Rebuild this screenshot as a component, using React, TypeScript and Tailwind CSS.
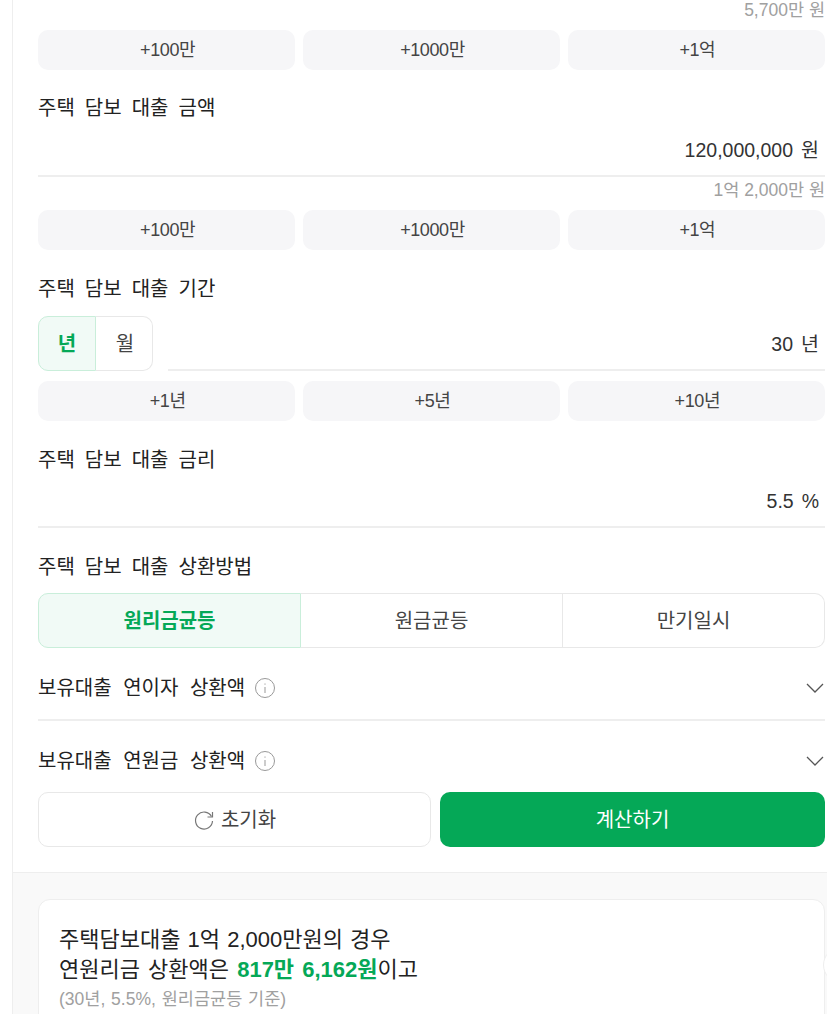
const FONT = "font-['Liberation_Sans','Noto_Sans_CJK_KR',sans-serif]";

function QuickButtons({ items }: { items: string[] }) {
  return (
    <div className="grid grid-cols-3 gap-[7.5px]">
      {items.map((item) => (
        <button
          key={item}
          className="h-10 rounded-[10px] bg-[#f6f6f8] pl-[2px] text-[18px] tracking-[-0.4px] text-[#444]"
        >
          {item}
        </button>
      ))}
    </div>
  );
}

function Label({ children }: { children: React.ReactNode }) {
  return <div className="text-[20px] leading-[26px] text-[#222] [word-spacing:4.5px]">{children}</div>;
}

function AmountInput({ value, unit }: { value: string; unit: string }) {
  return (
    <div className="flex h-[53px] items-center justify-end gap-[8px] border-b-2 border-[#eeeeee] pt-[3px] pr-[6px] text-[19.5px] text-[#333]">
      <span>{value}</span>
      <span>{unit}</span>
    </div>
  );
}

function Hint({ children }: { children: React.ReactNode }) {
  return <div className="text-right text-[17.5px] leading-5 text-[#a0a0a0]">{children}</div>;
}

function InfoIcon() {
  return (
    <svg width="22" height="22" viewBox="0 0 22 22" fill="none" stroke="#999" strokeWidth="1">
      <circle cx="11" cy="11" r="9.5" />
      <path d="M11 10v6M11 6.5v1.2" />
    </svg>
  );
}

function Chevron() {
  return (
    <svg width="20" height="12" viewBox="0 0 20 12" fill="none" stroke="#555" strokeWidth="1.3">
      <path d="M2 2l8 8 8-8" />
    </svg>
  );
}

function AccordionRow({ title, className }: { title: string; className: string }) {
  return (
    <div className={`flex items-center justify-between ${className}`}>
      <div className="flex items-center gap-[9px] text-[20px] text-[#222] [word-spacing:6px]">
        {title}
        <InfoIcon />
      </div>
      <Chevron />
    </div>
  );
}

export default function App() {
  return (
    <div className={`relative h-[1014px] overflow-hidden bg-white pl-3 ${FONT}`}>
      <div className="h-full border-l border-[#eeeeee]">
        <div className="pr-[2px] pl-[25px]">
          <div className="flex h-[30px] items-start justify-end">
            <Hint>5,700만 원</Hint>
          </div>
          <QuickButtons items={["+100만", "+1000만", "+1억"]} />

          <div className="mt-[25px]">
            <Label>주택 담보 대출 금액</Label>
          </div>
          <div className="mt-[3px]">
            <AmountInput value="120,000,000" unit="원" />
          </div>
          <div className="mt-[3px]">
            <Hint>1억 2,000만 원</Hint>
          </div>
          <div className="mt-[10px]">
            <QuickButtons items={["+100만", "+1000만", "+1억"]} />
          </div>

          <div className="mt-[26px]">
            <Label>주택 담보 대출 기간</Label>
          </div>
          <div className="mt-[14px] flex items-end gap-[15px]">
            <div className="flex h-[55px] w-[115px] rounded-[10px] text-[20px]">
              <div className="flex w-[58px] items-center justify-center rounded-l-[10px] border border-[#c9eeda] bg-[#f1faf6] font-bold text-[#05a857]">
                년
              </div>
              <div className="flex flex-1 items-center justify-center rounded-r-[10px] border border-l-0 border-[#e8e8e8] pl-[2px] text-[#444]">
                월
              </div>
            </div>
            <div className="flex-1">
              <AmountInput value="30" unit="년" />
            </div>
          </div>
          <div className="mt-[10px]">
            <QuickButtons items={["+1년", "+5년", "+10년"]} />
          </div>

          <div className="mt-[26px]">
            <Label>주택 담보 대출 금리</Label>
          </div>
          <div className="mt-[2px]">
            <AmountInput value="5.5" unit="%" />
          </div>

          <div className="mt-[26px]">
            <Label>주택 담보 대출 상환방법</Label>
          </div>
          <div className="mt-[13px] flex h-[55px] text-[20px]">
            <div className="flex w-[263px] items-center justify-center rounded-l-[10px] border border-[#c9eeda] bg-[#f1faf6] font-bold text-[#05a857]">
              원리금균등
            </div>
            <div className="flex w-[262px] items-center justify-center border-y border-r border-[#e8e8e8] text-[#444]">
              원금균등
            </div>
            <div className="flex flex-1 items-center justify-center rounded-r-[10px] border-y border-r border-[#e8e8e8] text-[#444]">
              만기일시
            </div>
          </div>

          <AccordionRow title="보유대출 연이자 상환액" className="h-[73px] border-b-2 border-[#eeeeee] pt-[8px]" />
          <AccordionRow title="보유대출 연원금 상환액" className="h-[71px] pt-[9px]" />

          <div className="flex gap-[9px]">
            <button className="flex h-[55px] w-[393px] items-center justify-center gap-[6px] rounded-[10px] border border-[#e8e8e8] text-[20px] text-[#444]">
              <svg width="22" height="22" viewBox="0 0 22 22" fill="none" stroke="#777" strokeWidth="1.2">
                <path d="M18.5 7.5A8.5 8.5 0 1 0 19.5 12" />
                <path d="M19.5 3v5h-5" />
              </svg>
              초기화
            </button>
            <button className="h-[55px] flex-1 rounded-[10px] bg-[#05a857] text-[20px] text-white">계산하기</button>
          </div>
        </div>

        <div className="mt-[25px] h-full border-t border-[#eeeeee] bg-[#f9f9f9] pt-[26px] pr-[2px] pl-[25px]">
          <div className="h-[200px] rounded-[12px] border border-[#eeeeee] bg-white px-5 pt-[25px] [word-spacing:1px]">
            <div className="text-[22px] leading-[30px] text-[#222]">주택담보대출 1억 2,000만원의 경우</div>
            <div className="text-[22px] leading-[30px] text-[#222] [word-spacing:2px]">
              연원리금 상환액은 <span className="font-bold text-[#05a857]">817만 6,162원</span>이고
            </div>
            <div className="text-[17.5px] leading-[28px] text-[#a0a0a0]">(30년, 5.5%, 원리금균등 기준)</div>
          </div>
        </div>
      </div>
      {/* floating button peeking in from the right edge */}
      <div className="absolute top-[947px] left-[823px] h-9 w-9 rounded-full border border-[#eeeeee] bg-white" />
    </div>
  );
}
